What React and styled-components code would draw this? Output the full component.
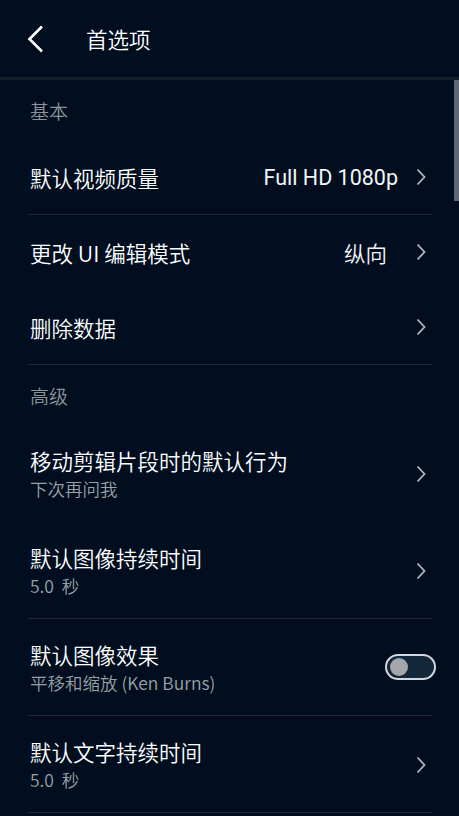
import React from 'react';
import styled, { createGlobalStyle } from 'styled-components';

const Global = createGlobalStyle`
  html, body {
    margin: 0;
    padding: 0;
    background: #000e1f;
  }
  body {
    font-family: "Noto Sans CJK SC", Roboto, "Noto Sans", sans-serif;
    font-weight: 350;
    color: #ffffff;
  }
`;

const Screen = styled.div`
  position: relative;
  width: 459px;
  height: 816px;
  overflow: hidden;
  background: #000e1f;
`;

const Header = styled.div`
  height: 77px;
  display: flex;
  align-items: center;
  border-bottom: 3px solid #131e2b;
`;

const BackButton = styled.div`
  width: 86px;
  padding-left: 26px;
  box-sizing: border-box;
  display: flex;
  align-items: center;
`;

const Title = styled.div`
  font-size: 21.5px;
  line-height: 1;
  color: #ffffff;
`;

const List = styled.div`
  padding: 0 26px 0 28px;
`;

const SectionHeader = styled.div`
  height: 60px;
  display: flex;
  align-items: center;
  padding-left: 2px;
  font-size: 19px;
  color: #8b929a;
`;

const Row = styled.div`
  height: ${p => (p.tall ? 97 : 75)}px;
  box-sizing: border-box;
  display: flex;
  align-items: center;
  padding-left: 2px;
  border-bottom: ${p => (p.divider ? '1px solid #1d2733' : '1px solid transparent')};
`;

const Texts = styled.div`
  flex: 1;
  display: flex;
  flex-direction: column;
  gap: 2px;
  padding-top: 2px;
`;

const Label = styled.div`
  font-size: 21.5px;
  line-height: 28px;
  color: #ffffff;
`;

const Sub = styled.div`
  font-size: 17.5px;
  line-height: 24px;
  color: #9aa0a6;
`;

const Value = styled.div`
  font-family: ${p => (p.cjk ? '"Noto Sans CJK SC", sans-serif' : 'Roboto, "Noto Sans CJK SC", sans-serif')};
  font-weight: ${p => (p.cjk ? 350 : 400)};
  font-size: 21.5px;
  color: #f4f5f6;
  margin-right: ${p => (p.cjk ? 28 : 17)}px;
`;

const ChevronBox = styled.div`
  width: 12px;
  display: flex;
  justify-content: center;
  margin-right: 6px;
  margin-top: ${p => (p.tall ? 2 : 0)}px;
`;

const Toggle = styled.div`
  width: 51px;
  height: 26px;
  box-sizing: border-box;
  border: 2px solid #d4d8dc;
  border-radius: 14px;
  background: #13273b;
  display: flex;
  align-items: center;
  padding-left: 3px;
  margin-right: -3px;
`;

const Knob = styled.div`
  width: 18px;
  height: 18px;
  border-radius: 50%;
  background: #a3a7ab;
`;

const Scrollbar = styled.div`
  position: absolute;
  right: 0;
  top: 80px;
  width: 5px;
  height: 121px;
  background: #5d6671;
`;

const Chevron = () => (
  <svg width="10" height="18" viewBox="0 0 10 18">
    <path d="M1.5 1.5 L8.5 9 L1.5 16.5" fill="none" stroke="#b3b8bd" strokeWidth="1.8" />
  </svg>
);

const BackIcon = () => (
  <svg width="20" height="28" viewBox="0 0 20 28">
    <path d="M16 1.5 L3.5 14 L16 26.5" fill="none" stroke="#ffffff" strokeWidth="2.6" />
  </svg>
);

export default function App() {
  return (
    <Screen>
      <Global />
      <Header>
        <BackButton><BackIcon /></BackButton>
        <Title>首选项</Title>
      </Header>
      <List>
        <SectionHeader>基本</SectionHeader>
        <Row divider>
          <Texts><Label>默认视频质量</Label></Texts>
          <Value>Full HD 1080p</Value>
          <ChevronBox><Chevron /></ChevronBox>
        </Row>
        <Row>
          <Texts><Label>更改 UI 编辑模式</Label></Texts>
          <Value cjk>纵向</Value>
          <ChevronBox><Chevron /></ChevronBox>
        </Row>
        <Row divider>
          <Texts><Label>删除数据</Label></Texts>
          <ChevronBox><Chevron /></ChevronBox>
        </Row>
        <SectionHeader>高级</SectionHeader>
        <Row tall>
          <Texts>
            <Label>移动剪辑片段时的默认行为</Label>
            <Sub>下次再问我</Sub>
          </Texts>
          <ChevronBox tall><Chevron /></ChevronBox>
        </Row>
        <Row tall divider>
          <Texts>
            <Label>默认图像持续时间</Label>
            <Sub>5.0 &nbsp;秒</Sub>
          </Texts>
          <ChevronBox tall><Chevron /></ChevronBox>
        </Row>
        <Row tall divider>
          <Texts>
            <Label>默认图像效果</Label>
            <Sub>平移和缩放 (Ken Burns)</Sub>
          </Texts>
          <Toggle><Knob /></Toggle>
        </Row>
        <Row tall divider>
          <Texts>
            <Label>默认文字持续时间</Label>
            <Sub>5.0 &nbsp;秒</Sub>
          </Texts>
          <ChevronBox tall><Chevron /></ChevronBox>
        </Row>
      </List>
      <Scrollbar />
    </Screen>
  );
}
